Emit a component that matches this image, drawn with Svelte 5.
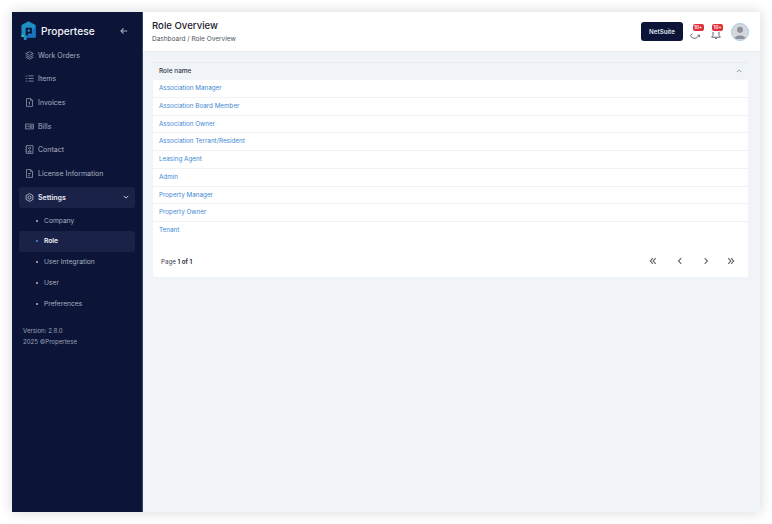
<script lang="ts">
	const mainLinks = [
		{ label: 'Work Orders', icon: 'stack' },
		{ label: 'Items', icon: 'list' },
		{ label: 'Invoices', icon: 'invoice' },
		{ label: 'Bills', icon: 'bill' },
		{ label: 'Contact', icon: 'contact' },
		{ label: 'License Information', icon: 'license' }
	];
	const subLinks = ['Company', 'Role', 'User Integration', 'User', 'Preferences'];
	const roles = [
		'Association Manager',
		'Association Board Member',
		'Association Owner',
		'Association Terrant/Resident',
		'Leasing Agent',
		'Admin',
		'Property Manager',
		'Property Owner',
		'Tenant'
	];
</script>

<div class="window">
	<aside class="sidebar">
		<div class="brand">
			<svg class="logo" viewBox="0 0 16 20" width="15" height="19">
				<path d="M8 0 15.5 4V17.5H6V20H3V17H.5V4Z" fill="#1d8fc0" />
				<path d="M15.5 6V17.5H6V15Z" fill="#1a74c4" />
				<rect x=".5" y="14.5" width="2.4" height="2.5" fill="#30bfae" />
				<path d="M5 7H11.6V13.2H7.4V15.4H5Z" fill="#0c1538" />
				<rect x="7.2" y="9" width="2.2" height="2.2" fill="#2a9fd8" />
			</svg>
			<span class="brand-name">Propertese</span>
			<svg class="collapse" viewBox="0 0 10 10" width="8" height="8">
				<path d="M9 5H1.5M4.5 1.8 1.2 5l3.3 3.2" fill="none" stroke="currentColor" stroke-width="1.3" />
			</svg>
		</div>

		<nav class="nav">
			{#each mainLinks as link}
				<div class="nav-item">
					<svg class="nav-icon" viewBox="0 0 12 12" width="9" height="9" fill="none" stroke="currentColor" stroke-width=".9">
						{#if link.icon === 'stack'}
							<path d="M6 1 11 3.4 6 5.8 1 3.4ZM1 6l5 2.4L11 6M1 8.4l5 2.4 5-2.4" />
						{:else if link.icon === 'list'}
							<path d="M4.5 2.5H11.5M4.5 6H11.5M4.5 9.5H11.5M.8 2.5l.8.8 1.2-1.4M.8 6h2M.8 9.5h2" />
						{:else if link.icon === 'invoice'}
							<path d="M2 .8H7.8L10 3V11.2H2ZM7.5 1V3.2H10M6 5V9M4.8 6H6" />
						{:else if link.icon === 'bill'}
							<path d="M.6 2.8H11.4V9.2H.6ZM2.4 5V7M4.4 5V7M6.4 5H9.6V7H6.4Z" />
						{:else if link.icon === 'contact'}
							<path d="M1.8.8H10.6V11.2H1.8ZM.6 3H1.8M.6 6H1.8M.6 9H1.8M4 9.4C4 7 8.4 7 8.4 9.4ZM6.2 3.2A1.3 1.3 0 1 1 6.19 3.2Z" />
						{:else}
							<path d="M2 .8H7.8L10 3V11.2H2ZM7.5 1V3.2H10M4.2 6H7.8M4.2 8.4H6.4" />
						{/if}
					</svg>
					<span>{link.label}</span>
				</div>
			{/each}

			<div class="nav-item open">
				<svg class="nav-icon" viewBox="0 0 12 12" width="9" height="9" fill="none" stroke="currentColor" stroke-width=".9">
					<circle cx="6" cy="6" r="2" />
					<path d="M6 .8 10.6 3.4V8.6L6 11.2 1.4 8.6V3.4Z" stroke-linejoin="round" />
				</svg>
				<span>Settings</span>
				<svg class="chevron" viewBox="0 0 8 8" width="6" height="6">
					<path d="M1 2.5 4 5.5 7 2.5" fill="none" stroke="currentColor" stroke-width="1.1" />
				</svg>
			</div>

			<div class="sub-nav">
				{#each subLinks as sub}
					<div class="sub-item" class:active={sub === 'Role'}>
						<i class="dot"></i>
						<span>{sub}</span>
					</div>
				{/each}
			</div>
		</nav>

		<div class="version">
			<div>Version: 2.8.0</div>
			<div>2025 ©Propertese</div>
		</div>
	</aside>

	<div class="main">
		<header class="topbar">
			<div>
				<h1>Role Overview</h1>
				<div class="crumbs">Dashboard / Role Overview</div>
			</div>
			<div class="actions">
				<button class="netsuite">NetSuite</button>
				<div class="icon-badge">
					<svg viewBox="0 0 10 7" width="10" height="7" fill="none" stroke="#5f6672" stroke-width="1">
						<path d="M.6 3.4C1 6 4 6.8 6.2 6L9.4 3.2M7.6 3.2H9.6V5.2M.6 3.4 2.4 1.6" />
					</svg>
					<b>10+</b>
				</div>
				<div class="icon-badge bell">
					<svg viewBox="0 0 10 7" width="10" height="7" fill="none" stroke="#5f6672" stroke-width="1">
						<path d="M2 0V3.5L.6 5.2H9.4L8 3.5V0M4 6.6H6" />
					</svg>
					<b>10+</b>
				</div>
				<div class="avatar">
					<svg viewBox="0 0 18 18" width="16" height="16">
						<circle cx="9" cy="6.6" r="3.4" fill="#8d9197" />
						<path d="M2.5 17C3 11.6 15 11.6 15.5 17Z" fill="#8d9197" />
					</svg>
				</div>
			</div>
		</header>

		<main class="content">
			<section class="card">
				<div class="table-head">
					<span>Role name</span>
					<svg viewBox="0 0 8 8" width="6" height="6">
						<path d="M1 5.5 4 2.5 7 5.5" fill="none" stroke="#8a909a" stroke-width="1.2" />
					</svg>
				</div>
				{#each roles as role}
					<div class="row">{role}</div>
				{/each}
				<div class="pager">
					<div class="page-label">Page <strong>1 of 1</strong></div>
					<div class="pager-buttons">
						<svg viewBox="0 0 10 10" width="8" height="8"><path d="M4.8 1.5 1.6 5l3.2 3.5M8.4 1.5 5.2 5l3.2 3.5" /></svg>
						<svg viewBox="0 0 10 10" width="8" height="8"><path d="M7.8 1.5 4.4 5l3.4 3.5" /></svg>
						<svg viewBox="0 0 10 10" width="8" height="8"><path d="M4.6 1.5 8 5 4.6 8.5" /></svg>
						<svg viewBox="0 0 10 10" width="8" height="8"><path d="M1.6 1.5 4.8 5 1.6 8.5M5.2 1.5 8.4 5 5.2 8.5" /></svg>
					</div>
				</div>
			</section>
		</main>
	</div>
</div>

<style>
	:global(body) {
		background: #fff;
		font-family: Inter, 'Liberation Sans', sans-serif;
	}

	.window {
		display: flex;
		width: 748px;
		height: 500px;
		margin: 12px;
		background: #f0f4f9;
		box-shadow: 0 0 12px rgba(20, 30, 50, 0.18);
		overflow: hidden;
	}

	.sidebar {
		display: flex;
		flex-direction: column;
		flex: 0 0 131px;
		padding: 0 7px;
		box-sizing: border-box;
		background: #0c1538;
		border-right: 1px solid #3a4463;
		color: #a9afc0;
	}

	.brand {
		display: flex;
		align-items: center;
		height: 32.5px;
		padding: 5px 2px 0 2px;
		box-sizing: border-box;
	}

	.logo {
		margin-right: 5px;
	}

	.brand-name {
		flex: 1;
		font-size: 10.2px;
		font-weight: 500;
		color: #f2f4f8;
	}

	.collapse {
		margin-right: 5px;
		color: #a9afc0;
	}

	.nav {
		display: flex;
		flex-direction: column;
		gap: 2.7px;
	}

	.nav-item {
		display: flex;
		align-items: center;
		gap: 4px;
		height: 21px;
		padding: 0 6px;
		font-size: 7px;
		border-radius: 3px;
	}

	.nav-icon {
		flex: none;
	}

	.open {
		background: #1a2347;
		color: #e8ebf2;
		font-weight: 600;
	}

	.open span {
		flex: 1;
	}

	.sub-nav {
		display: flex;
		flex-direction: column;
		margin-top: 0;
	}

	.sub-item {
		display: flex;
		align-items: center;
		gap: 6px;
		height: 20.75px;
		padding-left: 17px;
		font-size: 6.7px;
		border-radius: 3px;
	}

	.dot {
		width: 2px;
		height: 2px;
		border-radius: 50%;
		background: #b5bac8;
	}

	.active {
		background: #1a2347;
		color: #eef0f6;
		font-weight: 600;
	}

	.active .dot {
		background: #3f8fe0;
	}

	.version {
		margin-top: 11px;
		padding-left: 4px;
		font-size: 6.1px;
		line-height: 11px;
		color: #9aa1b4;
	}

	.main {
		flex: 1;
		min-width: 0;
	}

	.topbar {
		display: flex;
		align-items: center;
		justify-content: space-between;
		height: 39px;
		padding: 0 11px 0 9px;
		background: #fff;
		border-bottom: 1px solid #e9edf2;
	}

	h1 {
		margin: 0 0 4px;
		font-size: 9.6px;
		font-weight: 500;
		color: #1c2230;
	}

	.crumbs {
		font-size: 6.5px;
		color: #4c5462;
	}

	.actions {
		display: flex;
		align-items: center;
	}

	.netsuite {
		width: 42px;
		height: 19px;
		padding: 0;
		border: none;
		border-radius: 3px;
		background: #0c1538;
		color: #dfe3ec;
		font: 600 6.2px Inter, 'Liberation Sans', sans-serif;
	}

	.icon-badge {
		position: relative;
		display: flex;
		width: 12px;
		height: 15px;
		margin-left: 7px;
		align-items: flex-end;
	}

	.bell {
		margin-left: 9px;
	}

	.icon-badge b {
		position: absolute;
		top: 0;
		left: 2.5px;
		padding: 1px 1.5px;
		border-radius: 2px;
		background: #e0303c;
		color: #fff;
		font-size: 4.6px;
		line-height: 5px;
		font-weight: 600;
	}

	.bell b {
		left: 1px;
	}

	.avatar {
		display: flex;
		align-items: flex-end;
		justify-content: center;
		box-sizing: border-box;
		width: 18px;
		height: 18px;
		margin-left: 8px;
		border-radius: 50%;
		background: #d4d7db;
		border: 1px solid #a9cbe6;
		overflow: hidden;
	}

	.content {
		padding: 10px 12px 0 10px;
	}

	.card {
		background: #fff;
		border-radius: 0 0 3px 3px;
	}

	.table-head {
		display: flex;
		align-items: center;
		justify-content: space-between;
		height: 18px;
		padding: 0 6px 1px;
		background: #f0f4f9;
		border-top: 1px solid #e6eaf0;
		box-sizing: border-box;
		font-size: 6.5px;
		font-weight: 500;
		color: #323946;
	}

	.row {
		height: 17.75px;
		box-sizing: border-box;
		padding: 0 6px;
		line-height: 16.5px;
		font-size: 6.3px;
		color: #3f88d2;
		border-bottom: 1px solid #f0f2f5;
	}

	.row:nth-last-child(2) {
		border-bottom: none;
	}

	.pager {
		display: flex;
		align-items: center;
		justify-content: space-between;
		height: 37.25px;
		padding: 6px 13px 0 8px;
		box-sizing: border-box;
	}

	.page-label {
		font-size: 6.2px;
		color: #3a404c;
	}

	.page-label strong {
		font-weight: 600;
		color: #20252f;
	}

	.pager-buttons {
		display: flex;
		gap: 18px;
	}

	.pager-buttons path {
		fill: none;
		stroke: #62666e;
		stroke-width: 1.4;
	}
</style>
